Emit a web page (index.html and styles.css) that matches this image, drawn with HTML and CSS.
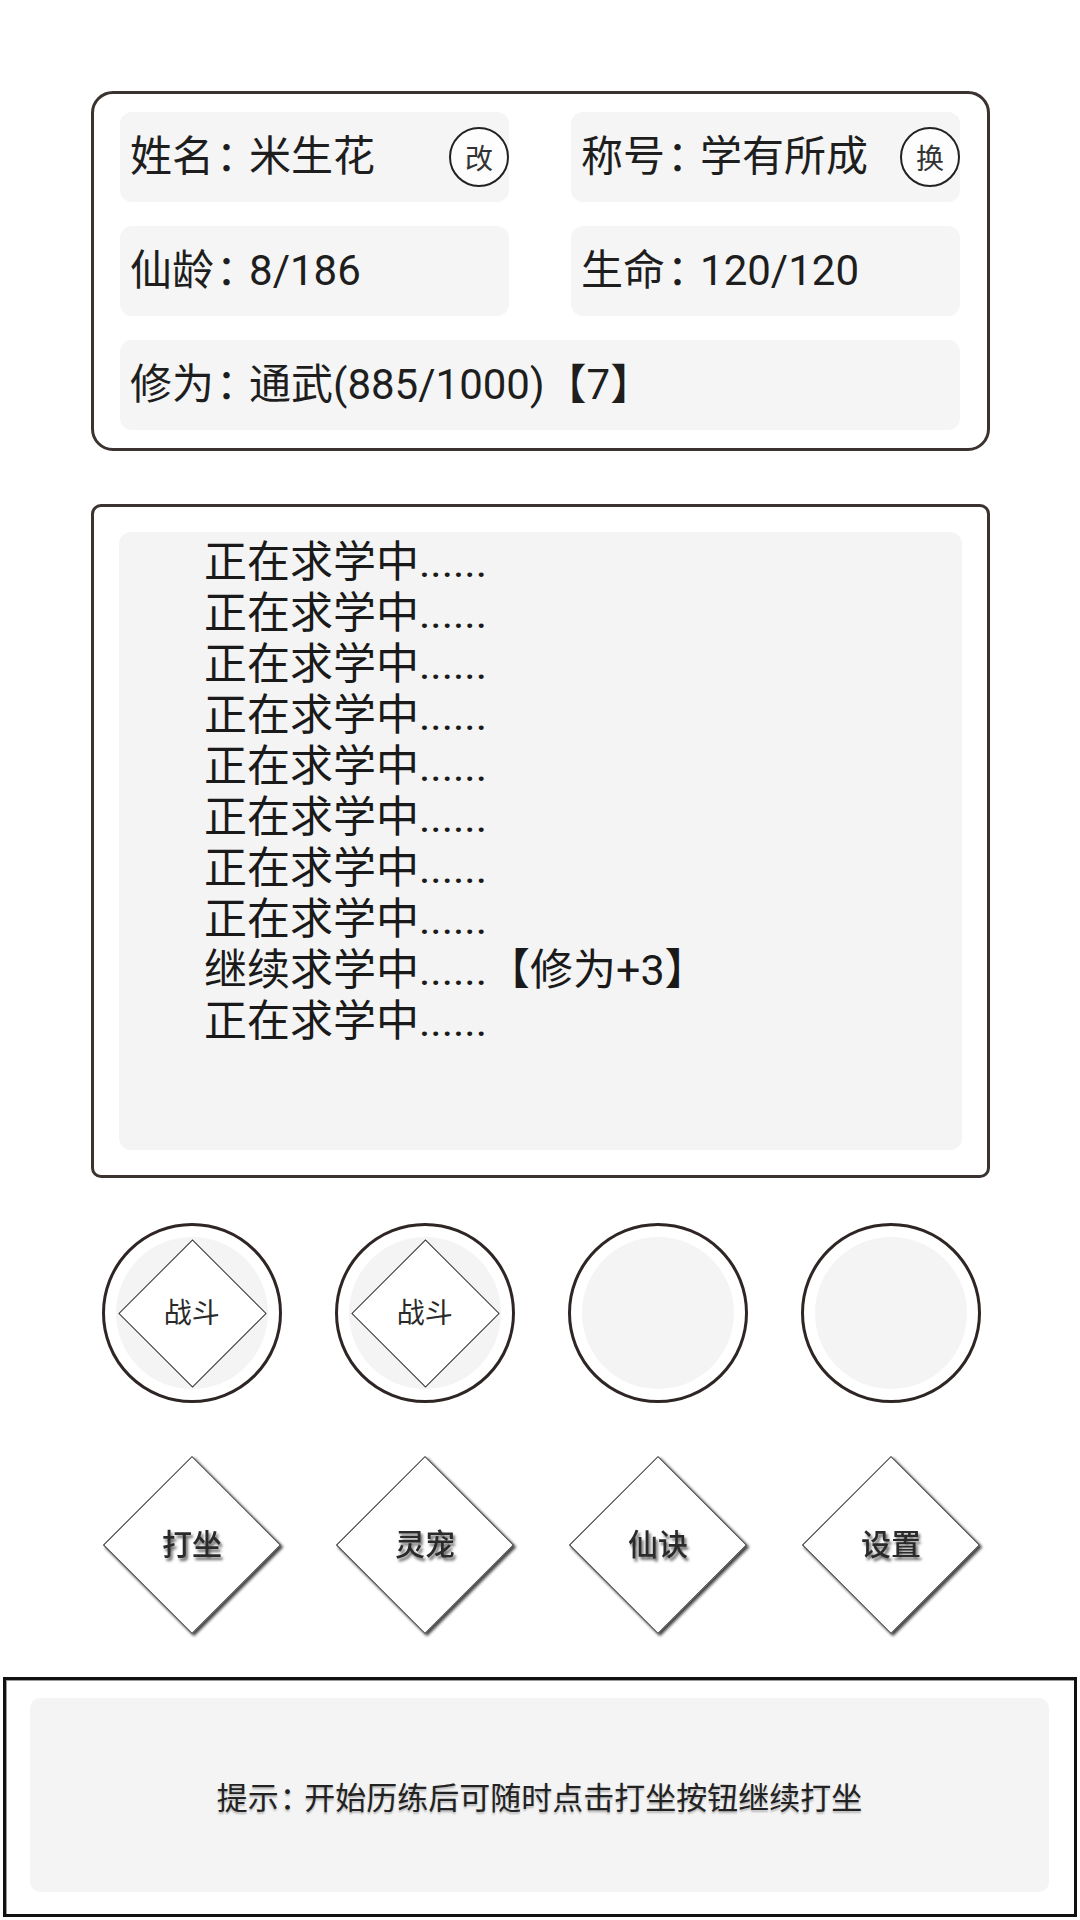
FILE: index.html
```html
<!DOCTYPE html>
<html lang="zh">
<head>
<meta charset="utf-8">
<title>修仙</title>
<link rel="stylesheet" href="styles.css">
</head>
<body>
<div class="page">
  <section class="info-card">
    <div class="cell"><span class="cell-text">姓名<span class="colon">：</span>米生花</span><span class="round-btn">改</span></div>
    <div class="cell"><span class="cell-text">称号<span class="colon">：</span>学有所成</span><span class="round-btn">换</span></div>
    <div class="cell"><span class="cell-text">仙龄<span class="colon">：</span>8/186</span></div>
    <div class="cell"><span class="cell-text">生命<span class="colon">：</span>120/120</span></div>
    <div class="cell wide"><span class="cell-text">修为<span class="colon">：</span>通武(885/1000)【7】</span></div>
  </section>

  <section class="log-card">
    <div class="log">
      <div class="log-line">正在求学中......</div>
      <div class="log-line">正在求学中......</div>
      <div class="log-line">正在求学中......</div>
      <div class="log-line">正在求学中......</div>
      <div class="log-line">正在求学中......</div>
      <div class="log-line">正在求学中......</div>
      <div class="log-line">正在求学中......</div>
      <div class="log-line">正在求学中......</div>
      <div class="log-line">继续求学中......【修为+3】</div>
      <div class="log-line">正在求学中......</div>
    </div>
  </section>

  <div class="circle-row">
    <div class="ring"><div class="ring-fill"><div class="mini-diamond"><span class="mini-label">战斗</span></div></div></div>
    <div class="ring"><div class="ring-fill"><div class="mini-diamond"><span class="mini-label">战斗</span></div></div></div>
    <div class="ring"><div class="ring-fill"></div></div>
    <div class="ring"><div class="ring-fill"></div></div>
  </div>

  <div class="diamond-row">
    <div class="diamond-slot"><div class="diamond"><span class="diamond-label">打坐</span></div></div>
    <div class="diamond-slot"><div class="diamond"><span class="diamond-label">灵宠</span></div></div>
    <div class="diamond-slot"><div class="diamond"><span class="diamond-label">仙诀</span></div></div>
    <div class="diamond-slot"><div class="diamond"><span class="diamond-label">设置</span></div></div>
  </div>

  <section class="tip-box">
    <div class="tip">提示<span class="tip-colon">：</span>开始历练后可随时点击打坐按钮继续打坐</div>
  </section>
</div>
</body>
</html>
```

FILE: styles.css
```css
* {
  box-sizing: border-box;
}

html, body {
  margin: 0;
  padding: 0;
  background: #ffffff;
}

body {
  width: 1080px;
  height: 1920px;
  overflow: hidden;
  font-family: Roboto, "Noto Sans CJK SC", sans-serif;
  color: #1e1e1e;
}

.page {
  display: flex;
  flex-direction: column;
  align-items: flex-start;
}

/* ---------- info card ---------- */
.info-card {
  margin: 91px 0 0 91px;
  width: 899px;
  height: 360px;
  border: 3px solid #3a3330;
  border-radius: 22px;
  padding: 18px 25px 19px 26px;
  display: grid;
  grid-template-columns: 389px 389px;
  grid-template-rows: 90px 90px 90px;
  column-gap: 62px;
  row-gap: 24px;
}

.cell {
  background: #f5f5f5;
  border-radius: 12px;
  display: flex;
  align-items: center;
  justify-content: space-between;
  padding-left: 10px;
}

.cell.wide {
  grid-column: 1 / span 2;
}

.cell-text {
  font-size: 42px;
  line-height: 1;
  white-space: nowrap;
}

.colon {
  font-feature-settings: "halt" 1;
  margin-left: 2px;
  margin-right: 12px;
}

.round-btn {
  width: 60px;
  height: 60px;
  border: 2px solid #222;
  border-radius: 50%;
  background: #fdfdfd;
  display: flex;
  align-items: center;
  justify-content: center;
  font-size: 28px;
  color: #333;
  flex: none;
}

/* ---------- log card ---------- */
.log-card {
  margin: 53px 0 0 91px;
  width: 899px;
  height: 674px;
  border: 3px solid #3a3330;
  border-radius: 10px;
  padding: 25px;
}

.log {
  height: 100%;
  background: #f4f4f4;
  border-radius: 12px;
  padding: 5px 0 0 85px;
}

.log-line {
  font-size: 43px;
  line-height: 51px;
  white-space: nowrap;
  color: #1a1a1a;
}

/* ---------- circle row ---------- */
.circle-row {
  margin-top: 45px;
  padding-left: 102px;
  display: flex;
  gap: 53px;
}

.ring {
  width: 180px;
  height: 180px;
  border: 3px solid #2e2624;
  border-radius: 50%;
  background: #ffffff;
  display: flex;
  align-items: center;
  justify-content: center;
}

.ring-fill {
  width: 152px;
  height: 152px;
  border-radius: 50%;
  background: #f4f4f4;
  display: flex;
  align-items: center;
  justify-content: center;
}

.mini-diamond {
  width: 105px;
  height: 105px;
  flex: none;
  border: 1.5px solid #333;
  background: #ffffff;
  transform: rotate(45deg);
  display: flex;
  align-items: center;
  justify-content: center;
}

.mini-label {
  transform: rotate(-45deg);
  font-size: 28px;
  line-height: 1;
  color: #2a2a2a;
  white-space: nowrap;
}

/* ---------- diamond row ---------- */
.diamond-row {
  margin-top: 52px;
  padding-left: 102px;
  display: flex;
  gap: 53px;
}

.diamond-slot {
  width: 180px;
  height: 180px;
  display: flex;
  align-items: center;
  justify-content: center;
  filter: drop-shadow(2px 2px 1.5px rgba(0, 0, 0, 0.75));
}

.diamond {
  width: 126px;
  height: 126px;
  flex: none;
  border: 1.5px solid #333;
  background: #ffffff;
  transform: rotate(45deg);
  display: flex;
  align-items: center;
  justify-content: center;
}

.diamond-label {
  transform: rotate(-45deg);
  font-size: 30px;
  font-weight: 500;
  line-height: 1;
  color: #2a2a2a;
  white-space: nowrap;
  text-shadow: 2px 3px 3px rgba(0, 0, 0, 0.6);
}

/* ---------- tip box ---------- */
.tip-box {
  margin: 42px 0 0 3px;
  width: 1074px;
  height: 240px;
  border: 3px solid #111;
  box-shadow: inset 1px 1px 0 #9a9a9a;
  padding: 18px 25px 22px 24px;
}

.tip {
  height: 100%;
  background: #f4f4f4;
  border-radius: 10px;
  display: flex;
  align-items: center;
  justify-content: center;
  font-size: 31px;
  color: #222;
  text-shadow: 0 2px 2px rgba(0, 0, 0, 0.25);
  white-space: nowrap;
}

.tip-colon {
  font-feature-settings: "halt" 1;
  margin-left: 1px;
  margin-right: 9px;
}
```
